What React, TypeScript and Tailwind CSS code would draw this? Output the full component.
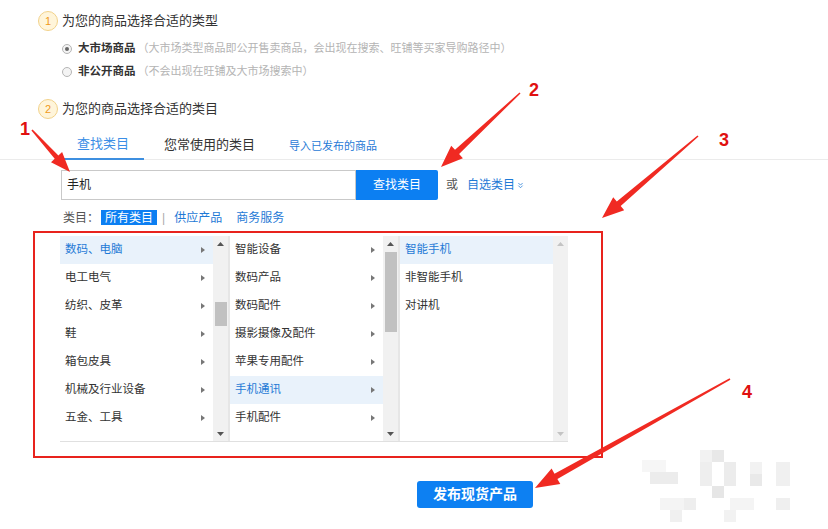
import { ChevronsDown } from "lucide-react";

const COL1 = ["数码、电脑", "电工电气", "纺织、皮革", "鞋", "箱包皮具", "机械及行业设备", "五金、工具"];
const COL2 = ["智能设备", "数码产品", "数码配件", "摄影摄像及配件", "苹果专用配件", "手机通讯", "手机配件"];
const COL3 = ["智能手机", "非智能手机", "对讲机"];

// tapered red annotation arrow, tail -> tip
const arrowPoints = (x1: number, y1: number, x2: number, y2: number, hl = 22, hw = 17, w0 = 1.5, w1 = 6) => {
  const L = Math.hypot(x2 - x1, y2 - y1);
  const dx = (x2 - x1) / L;
  const dy = (y2 - y1) / L;
  const nx = -dy;
  const ny = dx;
  const bx = x2 - dx * hl;
  const by = y2 - dy * hl;
  const pts = [
    [x1 + (nx * w0) / 2, y1 + (ny * w0) / 2],
    [bx + (nx * w1) / 2, by + (ny * w1) / 2],
    [bx + (nx * hw) / 2, by + (ny * hw) / 2],
    [x2, y2],
    [bx - (nx * hw) / 2, by - (ny * hw) / 2],
    [bx - (nx * w1) / 2, by - (ny * w1) / 2],
    [x1 - (nx * w0) / 2, y1 - (ny * w0) / 2],
  ];
  return pts.map((p) => p.map((v) => v.toFixed(1)).join(",")).join(" ");
};

const Step = ({ n, label }: { n: number; label: string }) => (
  <div className="flex items-center h-5 gap-[4px]">
    <span className="w-5 h-5 rounded-full border border-[#f2d28a] bg-[#fff5da] text-[11px] text-[#f09a1a] flex items-center justify-center">
      {n}
    </span>
    <span className="text-[13px] text-[#333]">{label}</span>
  </div>
);

const Radio = ({ checked, label, hint }: { checked?: boolean; label: string; hint: string }) => (
  <div className="flex items-center h-[23px] ml-[24px]">
    <span className="w-[10px] h-[10px] rounded-full border border-[#b5b5b5] bg-[#f4f4f4] flex items-center justify-center">
      {checked && <span className="w-[4px] h-[4px] rounded-full bg-[#666]" />}
    </span>
    <span className="ml-[6px] text-[11.5px] font-bold text-[#333]">{label}</span>
    <span className="ml-[2px] text-[11px] text-[#b4b4b4]">{hint}</span>
  </div>
);

const Caret = () => (
  <svg width="4" height="6" viewBox="0 0 4 6">
    <path d="M0 0L4 3L0 6Z" fill="#777" />
  </svg>
);

const ScrollBar = ({ thumbTop, thumbH, disabled }: { thumbTop?: number; thumbH?: number; disabled?: boolean }) => {
  const c = disabled ? "#c4c4c4" : "#555";
  return (
    <div className="w-[15px] bg-[#f1f1f1] flex flex-col">
      <div className="h-[15px] flex items-center justify-center">
        <svg width="7" height="4" viewBox="0 0 7 4">
          <path d="M0 4L3.5 0L7 4Z" fill={c} />
        </svg>
      </div>
      <div className="flex-1 flex flex-col items-center">
        {thumbH ? <div className="w-[12px] bg-[#c1c1c1]" style={{ marginTop: thumbTop, height: thumbH }} /> : null}
      </div>
      <div className="h-[15px] flex items-center justify-center">
        <svg width="7" height="4" viewBox="0 0 7 4">
          <path d="M0 0L3.5 4L7 0Z" fill={c} />
        </svg>
      </div>
    </div>
  );
};

const Column = ({
  items,
  active,
  caret,
  thumbTop,
  thumbH,
  disabled,
}: {
  items: string[];
  active: number;
  caret?: boolean;
  thumbTop?: number;
  thumbH?: number;
  disabled?: boolean;
}) => (
  <div className="flex w-[168px] h-full">
    <div className="w-[153px] h-full bg-white overflow-hidden">
      {items.map((it, i) => (
        <div
          key={it}
          className={`h-[28px] flex items-center justify-between pl-[5px] pr-[8px] text-[11.5px] ${
            i === active ? "bg-[#e9f2fb] text-[#1f7ad6]" : "text-[#333]"
          }`}
        >
          <span>{it}</span>
          {caret && <Caret />}
        </div>
      ))}
    </div>
    <ScrollBar thumbTop={thumbTop} thumbH={thumbH} disabled={disabled} />
  </div>
);

export default function App() {
  return (
    <div className="relative w-[828px] h-[529px] bg-white overflow-hidden font-['Liberation_Sans','Noto_Sans_CJK_SC',sans-serif]">
      <div className="pl-[38px] pt-[11px]">
        <Step n={1} label="为您的商品选择合适的类型" />
        <div className="mt-[6px]">
          <Radio checked label="大市场商品" hint="（大市场类型商品即公开售卖商品，会出现在搜索、旺铺等买家导购路径中）" />
          <Radio label="非公开商品" hint="（不会出现在旺铺及大市场搜索中）" />
        </div>
        <div className="mt-[16px]">
          <Step n={2} label="为您的商品选择合适的类目" />
        </div>
      </div>

      {/* tabs */}
      <div className="mt-[11px] h-[30px] flex items-stretch border-b border-[#ebebeb] pl-[62px]">
        <div className="px-[15px] flex items-center border-b-2 border-[#3d8fe0] -mb-px text-[13px] text-[#3a8ee6]">查找类目</div>
        <div className="ml-[5px] px-[15px] flex items-center text-[13px] text-[#333]">您常使用的类目</div>
        <div className="ml-[4px] px-[15px] flex items-center pt-[3px] text-[11px] text-[#1f7ad6]">导入已发布的商品</div>
      </div>

      {/* search */}
      <div className="mt-[10px] ml-[61px] flex items-center">
        <div className="w-[295px] h-[30px] border border-[#c9c9c9] pl-[5px] flex items-center text-[12px] text-[#222]">手机</div>
        <button className="w-[82px] h-[30px] bg-[#0c7ff2] rounded-r-[2px] text-white text-[12px]">查找类目</button>
        <span className="ml-[8px] text-[12px] text-[#555]">或</span>
        <span className="ml-[9px] text-[12px] text-[#1f7ad6] flex items-center">
          自选类目
          <ChevronsDown size={9} strokeWidth={2} className="ml-[1px]" />
        </span>
      </div>

      {/* category filter */}
      <div className="mt-[10px] ml-[63px] h-[15px] flex items-center text-[12px]">
        <span className="text-[#555]">类目：</span>
        <span className="ml-[2px] h-[15px] px-[4px] bg-[#0c7ff2] text-white flex items-center">所有类目</span>
        <span className="ml-[5px] text-[#aaa]">|</span>
        <span className="ml-[9px] text-[#1f7ad6]">供应产品</span>
        <span className="ml-[14px] text-[#1f7ad6]">商务服务</span>
      </div>

      {/* category panel */}
      <div className="mt-[11px] ml-[60px] w-[508px] h-[206px] flex gap-[2px] bg-[#e6e6e6] border-b border-[#e0e0e0]">
        <Column items={COL1} active={0} caret thumbTop={51} thumbH={24} />
        <Column items={COL2} active={5} caret thumbTop={1} thumbH={80} />
        <Column items={COL3} active={0} disabled />
      </div>

      <button className="mt-[39px] ml-[417px] w-[116px] h-[27px] rounded-[3px] bg-[#0d80f2] text-white font-bold text-[14px] flex items-center justify-center">
        发布现货产品
      </button>

      {/* pixelated watermark */}
      <svg className="absolute left-[630px] top-[450px] pointer-events-none" width="170" height="79" viewBox="0 0 170 79">
        <rect x="12" y="10" width="24" height="12" fill="#f6f6f6" />
        <rect x="20" y="22" width="28" height="12" fill="#ececec" />
        <rect x="70" y="0" width="12" height="12" fill="#f2f2f2" />
        <rect x="82" y="0" width="12" height="12" fill="#e8e8e8" />
        <rect x="70" y="12" width="12" height="24" fill="#eeeeee" />
        <rect x="94" y="12" width="12" height="24" fill="#ececec" />
        <rect x="82" y="36" width="12" height="12" fill="#e6e6e6" />
        <rect x="120" y="12" width="12" height="12" fill="#f2f2f2" />
        <rect x="120" y="24" width="12" height="12" fill="#e9e9e9" />
        <rect x="146" y="12" width="14" height="24" fill="#f0f0f0" />
        <rect x="30" y="48" width="24" height="12" fill="#f4f4f4" />
        <rect x="54" y="48" width="12" height="12" fill="#eeeeee" />
        <rect x="100" y="48" width="24" height="12" fill="#f4f4f4" />
        <rect x="146" y="48" width="14" height="12" fill="#efefef" />
        <rect x="40" y="60" width="12" height="12" fill="#f0f0f0" />
        <rect x="94" y="60" width="12" height="12" fill="#f2f2f2" />
      </svg>

      {/* red annotations */}
      <svg className="absolute inset-0 pointer-events-none" width="828" height="529" viewBox="0 0 828 529">
        <rect x="34" y="232" width="568" height="225" fill="none" stroke="#e8231d" strokeWidth="2" />
        <polygon points={arrowPoints(32, 130, 70, 172, 20, 15, 1.5, 5)} fill="#f02a22" />
        <polygon points={arrowPoints(520, 93, 441, 167, 22, 17, 1.5, 6)} fill="#f02a22" />
        <polygon points={arrowPoints(698, 136, 602, 218, 22, 17, 1.5, 6)} fill="#f02a22" />
        <polygon points={arrowPoints(730, 379, 535, 488, 24, 18, 1.5, 6)} fill="#f02a22" />
        <g fill="#e01010" fontFamily="Liberation Sans, sans-serif" fontWeight="bold" fontSize="18">
          <text x="20" y="135">1</text>
          <text x="529" y="96">2</text>
          <text x="719" y="146">3</text>
          <text x="742" y="398">4</text>
        </g>
      </svg>
    </div>
  );
}
